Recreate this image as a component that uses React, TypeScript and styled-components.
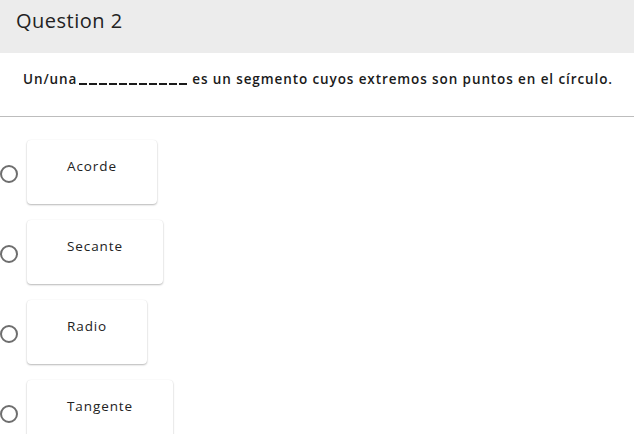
import styled, { createGlobalStyle } from 'styled-components';

const GlobalStyle = createGlobalStyle`
  html, body {
    margin: 0;
    padding: 0;
    background: #ffffff;
    font-family: "Open Sans", "Noto Sans", Arial, sans-serif;
    color: #1f1f1f;
  }
`;

const Page = styled.div`
  width: 634px;
  height: 434px;
  overflow: hidden;
  background: #fff;
`;

const Header = styled.header`
  height: 53px;
  background-color: #ececec;
  display: flex;
  align-items: flex-start;
  padding: 7px 0 0 16px;
  box-sizing: border-box;
`;

const Title = styled.h1`
  margin: 0;
  font-size: 20px;
  font-weight: 400;
  color: #222;
  letter-spacing: 0.5px;
`;

const Prompt = styled.p`
  margin: 0;
  height: 64px;
  display: flex;
  align-items: flex-start;
  padding: 16px 0 0 23px;
  box-sizing: border-box;
  font-size: 13.5px;
  line-height: 20px;
  font-weight: 600;
  color: #1a1a1a;
  letter-spacing: 0.9px;
  border-bottom: 1px solid #bdbdbd;
  white-space: pre;
`;

const Blank = styled.span`
  display: inline-flex;
  gap: 2px;
  margin: 14px 5px 0 2px;
`;

const Dash = styled.span`
  width: 8px;
  height: 2px;
  background: #1a1a1a;
`;

const Options = styled.div`
  display: flex;
  flex-direction: column;
  gap: 16px;
  padding-top: 23px;
`;

const OptionRow = styled.label`
  display: flex;
  align-items: center;
  gap: 9px;
`;

const Radio = styled.span`
  width: 18px;
  height: 18px;
  margin-top: 3px;
  border: 2px solid #6e6e6e;
  border-radius: 50%;
  box-sizing: border-box;
  flex-shrink: 0;
`;

const Card = styled.div`
  height: 64px;
  box-sizing: border-box;
  padding: 17px 40px 0 40px;
  background: #fff;
  border-radius: 4px;
  box-shadow: 0 1px 2px rgba(0, 0, 0, 0.28), 0 0 1px rgba(0, 0, 0, 0.08);
  font-size: 13.5px;
  color: #222;
  letter-spacing: 0.9px;
`;

const choices = ['Acorde', 'Secante', 'Radio', 'Tangente'];

export default function App() {
  return (
    <Page>
      <GlobalStyle />
      <Header>
        <Title>Question 2</Title>
      </Header>
      <Prompt>
        Un/una
        <Blank aria-label="__________">
          {Array.from({ length: 11 }).map((_, i) => (
            <Dash key={i} />
          ))}
        </Blank>
        es un segmento cuyos extremos son puntos en el círculo.
      </Prompt>
      <Options>
        {choices.map((c) => (
          <OptionRow key={c}>
            <Radio />
            <Card>{c}</Card>
          </OptionRow>
        ))}
      </Options>
    </Page>
  );
}
